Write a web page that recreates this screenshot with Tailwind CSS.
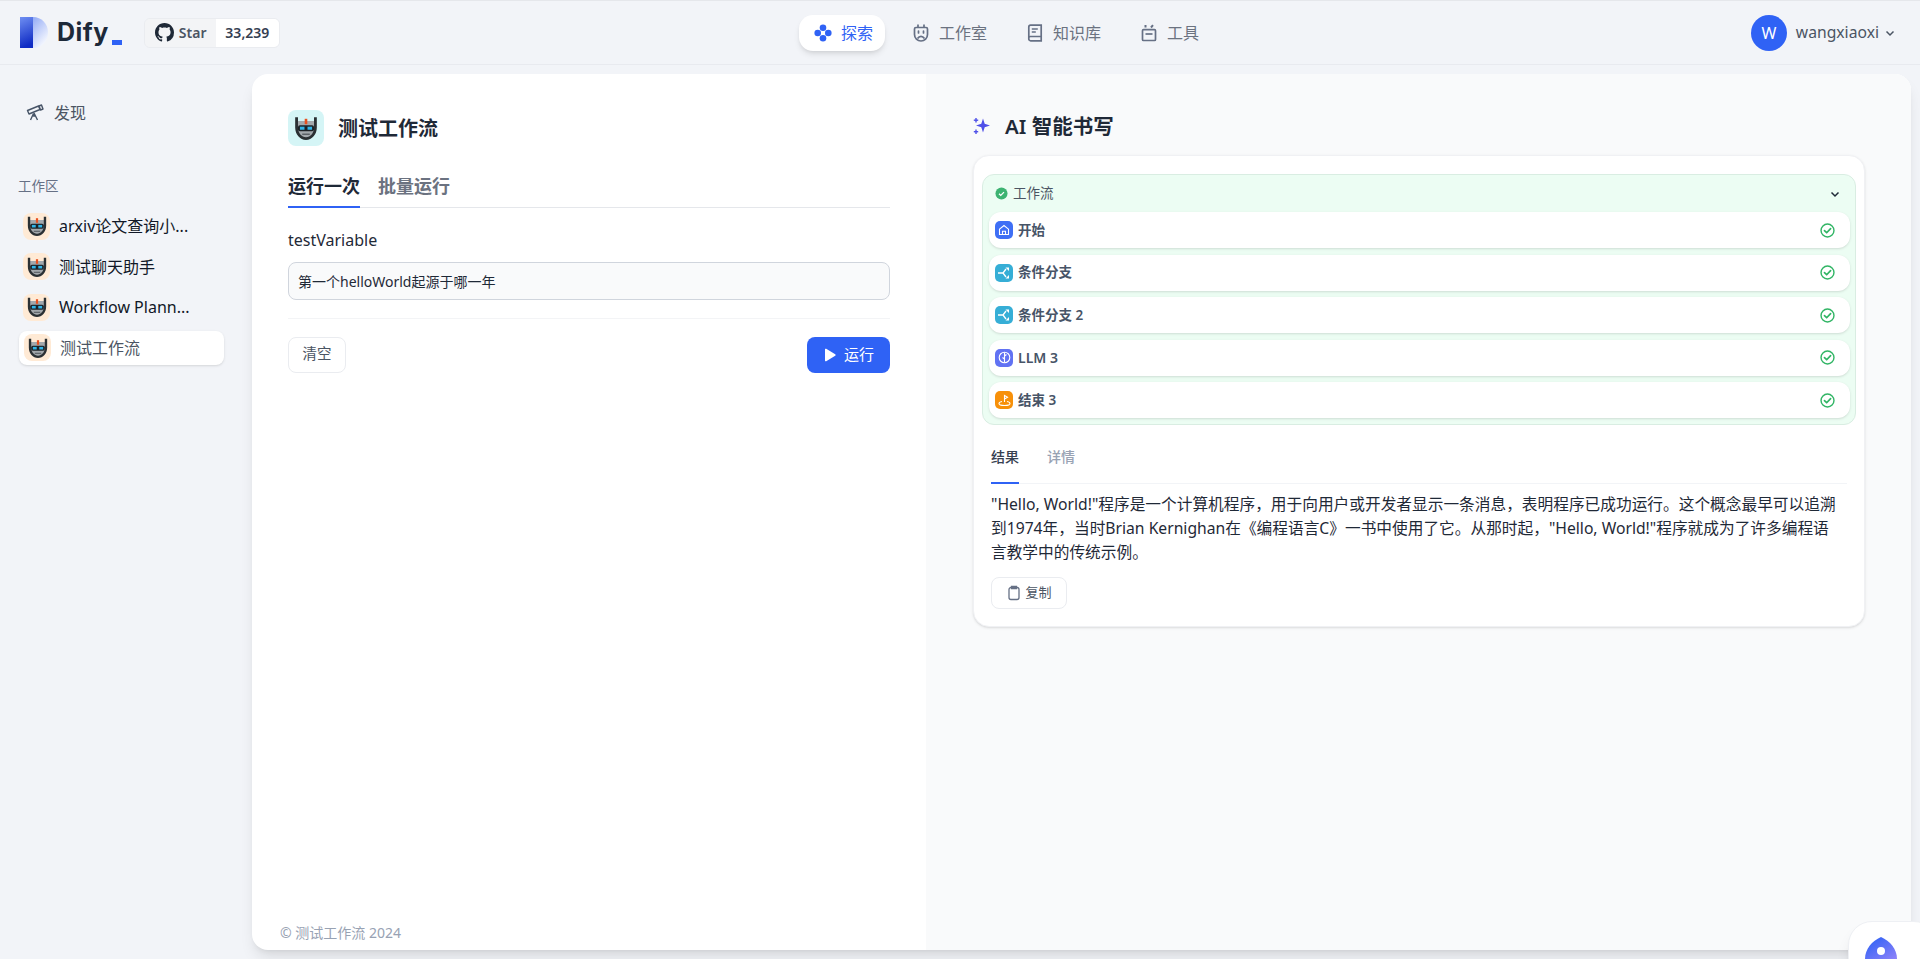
<!DOCTYPE html>
<html lang="en">
<head>
  <meta charset="UTF-8" />
  <meta name="viewport" content="width=device-width, initial-scale=1.0" />
  <title>测试工作流 - Dify</title>
  <script src="https://cdn.jsdelivr.net/npm/@tailwindcss/browser@4"></script>
</head>
<body class="bg-[#f2f4f8] text-[#1f2937] font-['Noto_Sans','Noto_Sans_CJK_SC',sans-serif]">
  <!-- shared icons -->
  <svg class="hidden">
    <defs>
      <symbol id="robot" viewBox="0 0 24 24">
        <path d="M2 2h2.600v3.500h14.800V2H22v9.500C22 18 17.500 23 12 23S2 18 2 11.500z" fill="#2b3033"/>
        <path d="M4.600 5.500h14.800v6c0 5-3.300 9-7.400 9s-7.400-4-7.400-9z" fill="#a3a8ac"/>
        <rect x="4.600" y="9.500" width="14.800" height="5.400" rx="1.800" fill="#1c2226"/>
        <rect x="6.400" y="10.800" width="4.200" height="2.800" fill="#2fb4e8"/>
        <rect x="13.400" y="10.800" width="4.200" height="2.800" fill="#2fb4e8"/>
        <rect x="10.800" y="3.500" width="2.400" height="5" fill="#e8501f"/>
        <path d="M8.500 17.800h7" stroke="#5b6065" stroke-width="1.300"/>
      </symbol>
      <symbol id="check" viewBox="0 0 16 16">
        <circle cx="8" cy="8" r="6.900" fill="none" stroke="#31b565" stroke-width="1.500"/>
        <path d="M4.800 8.200l2.300 2.200L11.300 6" fill="none" stroke="#31b565" stroke-width="1.800" stroke-linecap="round" stroke-linejoin="round"/>
      </symbol>
      <symbol id="branch" viewBox="0 0 18 18">
        <path d="M3 9h5l3-4M8 9l3 4" fill="none" stroke="#fff" stroke-width="1.300"/>
        <path d="M10.500 3.500h3.500v3.500zM10.500 14.500h3.500V11z" fill="#fff"/>
      </symbol>
    </defs>
  </svg>

  <div class="relative h-screen w-full overflow-hidden flex flex-col border-t border-[#e5e7eb]">
    <!-- header -->
    <header class="h-[64px] shrink-0 border-b border-[#e8eaef] flex items-center">
      <div class="w-[799px] shrink-0 flex items-center pl-[20px]">
        <svg class="w-[28px] h-[31px]" viewBox="0 0 28 31">
          <defs>
            <linearGradient id="logoA" x1="0" y1="0" x2="1" y2="1">
              <stop offset="0" stop-color="#6f8ff2"/>
              <stop offset="0.85" stop-color="#f2f5fe"/>
              <stop offset="1" stop-color="#ffffff"/>
            </linearGradient>
            <linearGradient id="logoB" x1="0" y1="0" x2="0.2" y2="1">
              <stop offset="0" stop-color="#6f8ff2"/>
              <stop offset="1" stop-color="#0f2bc4"/>
            </linearGradient>
          </defs>
          <path d="M0 0h13c8.500 0 15 6.500 15 15.500S21.500 31 13 31H0z" fill="url(#logoA)"/>
          <path d="M0 0h13v31H0z" fill="url(#logoB)"/>
        </svg>
        <span class="ml-[9px] text-[25px] leading-none font-bold tracking-[0.5px] text-[#1d2939] font-['Inter',sans-serif]">Dify</span>
        <span class="ml-[3px] mt-[19px] w-[10px] h-[5px] bg-[#2f62f5]"></span>
        <div class="ml-[22px] h-[30px] flex items-center rounded-md border border-[#eaecf0] overflow-hidden">
          <div class="h-full w-[71px] flex items-center gap-[5px] pl-[10px] bg-[#f3f4f6]">
            <svg class="w-[19px] h-[19px]" viewBox="0 0 16 16" fill="#1f2937"><path d="M8 0C3.580 0 0 3.580 0 8c0 3.540 2.290 6.530 5.470 7.590.4.070.55-.17.55-.38 0-.19-.01-.82-.01-1.490-2.010.37-2.530-.49-2.690-.94-.09-.23-.48-.94-.82-1.130-.28-.15-.68-.52-.01-.53.630-.01 1.080.58 1.230.82.720 1.210 1.870.87 2.330.66.070-.52.280-.87.510-1.070-1.780-.2-3.640-.89-3.640-3.950 0-.87.310-1.590.820-2.150-.08-.2-.36-1.020.08-2.120 0 0 .67-.21 2.200.82.640-.18 1.320-.27 2-.27s1.360.09 2 .27c1.530-1.040 2.200-.82 2.200-.82.440 1.100.16 1.920.08 2.120.51.560.82 1.270.82 2.150 0 3.070-1.870 3.750-3.650 3.950.29.250.54.730.54 1.480 0 1.070-.01 1.930-.01 2.200 0 .21.15.46.55.38A8.010 8.010 0 0 0 16 8c0-4.420-3.580-8-8-8z"/></svg>
            <span class="text-[14px] font-semibold text-[#4b5563]">Star</span>
          </div>
          <div class="h-full w-[63px] flex items-center justify-center bg-white text-[14px] font-semibold text-[#354052]">33,239</div>
        </div>
      </div>

      <nav class="flex items-center gap-[12px] text-[16px] text-[#6b7280]">
        <a class="h-[36px] flex items-center gap-2 pl-[14px] pr-[12px] rounded-[14px] bg-white text-[#2f62f5] shadow-md">
          <svg class="w-[20px] h-[20px]" viewBox="0 0 20 20" fill="#2f62f5"><circle cx="10" cy="4.700" r="3.300"/><circle cx="10" cy="15.300" r="3.300"/><circle cx="4.700" cy="10" r="3.300"/><circle cx="15.300" cy="10" r="3.300"/></svg>
          探索
        </a>
        <a class="h-[36px] flex items-center gap-2 pl-[14px] pr-[12px]">
          <svg class="w-[20px] h-[20px]" viewBox="0 0 20 20" fill="none" stroke="#667085" stroke-width="1.700"><path d="M7 1.500v3M13 1.500v3M5 4.500h10a1.500 1.500 0 0 1 1.500 1.500v5.500a6.500 6.500 0 0 1-13 0V6A1.500 1.500 0 0 1 5 4.500z"/><path d="M7.500 8v2M12.500 8v2" stroke-linecap="round"/><path d="M6.500 15.500c1 -1.500 2.200 -2.200 3.500 -2.200s2.500 .7 3.500 2.200"/></svg>
          工作室
        </a>
        <a class="h-[36px] flex items-center gap-2 pl-[14px] pr-[12px]">
          <svg class="w-[20px] h-[20px]" viewBox="0 0 20 20" fill="none" stroke="#667085" stroke-width="1.700"><path d="M3.800 15V4a1.800 1.800 0 0 1 1.800-1.800h10.600v15.600H5.600A1.800 1.800 0 0 1 3.800 16v-1a1.500 1.500 0 0 1 1.500-1.500h10.900"/><path d="M6.800 6h6M6.800 9h4"/></svg>
          知识库
        </a>
        <a class="h-[36px] flex items-center gap-2 pl-[14px] pr-[12px]">
          <svg class="w-[20px] h-[20px]" viewBox="0 0 20 20" fill="none" stroke="#667085" stroke-width="1.700"><rect x="3.500" y="6.700" width="13" height="10.800" rx="1"/><path d="M6.500 11h7"/><path d="M6.500 2v2.500M12 4.500l2-2.300" stroke-width="2"/></svg>
          工具
        </a>
      </nav>

      <div class="ml-auto pr-[24px] flex items-center">
        <div class="w-[36px] h-[36px] rounded-full bg-[#2f62f5] text-white text-[16px] flex items-center justify-center">W</div>
        <span class="ml-[9px] text-[15.700px] text-[#4b5563]">wangxiaoxi</span>
        <svg class="ml-[5px] w-[12px] h-[12px]" viewBox="0 0 12 12" fill="none" stroke="#4b5563" stroke-width="1.500"><path d="M2.500 4.500L6 8l3.500-3.500"/></svg>
      </div>
    </header>

    <div class="flex-1 min-h-0 flex">
      <!-- sidebar -->
      <aside class="w-[252px] shrink-0 pl-[19px] pr-[28px] pt-[32px]">
        <div class="flex items-center gap-[10px] pl-[7px] h-[32px] text-[16px] text-[#4b5563]">
          <svg class="w-[18px] h-[18px]" viewBox="0 0 18 18" fill="none" stroke="#475467" stroke-width="1.400" stroke-linejoin="round"><path d="M1.500 6.500l11-4.500 1.500 3.500-11 4.500z"/><path d="M13 2l2.500-1L17 5l-2.500 1z"/><path d="M8 9l3.500 7M7.500 9.500L4.500 16M8 9.500V13"/></svg>
          发现
        </div>
        <div class="mt-[47px] -ml-px text-[13.500px] leading-[20px] text-[#667085]">工作区</div>
        <ul class="mt-[13px] flex flex-col gap-[6.500px] text-[16px] text-[#111827]">
          <li class="h-[34px] flex items-center gap-[9px] pl-[4px]">
            <span class="w-[27px] h-[27px] rounded-lg bg-[#ffead5] flex items-center justify-center"><svg class="w-[22px] h-[22px]"><use href="#robot"/></svg></span>
            arxiv论文查询小...
          </li>
          <li class="h-[34px] flex items-center gap-[9px] pl-[4px]">
            <span class="w-[27px] h-[27px] rounded-lg bg-[#ffead5] flex items-center justify-center"><svg class="w-[22px] h-[22px]"><use href="#robot"/></svg></span>
            测试聊天助手
          </li>
          <li class="h-[34px] flex items-center gap-[9px] pl-[4px]">
            <span class="w-[27px] h-[27px] rounded-lg bg-[#ffead5] flex items-center justify-center"><svg class="w-[22px] h-[22px]"><use href="#robot"/></svg></span>
            Workflow Plann...
          </li>
          <li class="h-[34px] flex items-center gap-[9px] pl-[5px] rounded-lg bg-white shadow-sm text-[#4b5563]">
            <span class="w-[27px] h-[27px] rounded-lg bg-[#ffead5] flex items-center justify-center"><svg class="w-[22px] h-[22px]"><use href="#robot"/></svg></span>
            测试工作流
          </li>
        </ul>
      </aside>

      <!-- main card -->
      <main class="flex-1 min-w-0 mt-[9px] mb-[9px] mr-[9px] rounded-2xl bg-white shadow-lg flex overflow-hidden">
        <section class="w-[674px] shrink-0 px-[36px] pt-[36px] flex flex-col">
          <div class="flex items-center gap-[14px]">
            <span class="w-[36px] h-[36px] rounded-lg bg-[#d5f5f6] flex items-center justify-center"><svg class="w-[26px] h-[26px]"><use href="#robot"/></svg></span>
            <h1 class="mt-[1px] text-[20px] font-semibold text-[#1f2937]">测试工作流</h1>
          </div>
          <div class="mt-[23px] flex gap-[18px] border-b border-[#e5e7eb] text-[18px] leading-[27px] font-semibold h-[39px]">
            <div class="h-[39px] pt-[4px] border-b-2 border-[#2f62f5] text-[#1f2937]">运行一次</div>
            <div class="pt-[4px] text-[#6b7280]">批量运行</div>
          </div>
          <label class="mt-[20px] text-[16px] leading-[24px] text-[#1f2937]">testVariable</label>
          <div class="mt-[10px] h-[38px] px-[9px] rounded-lg border border-[#d0d5dd] bg-[#f9fafb] flex items-center text-[14px] text-[#1f2937]">第一个helloWorld起源于哪一年</div>
          <div class="mt-[18px] border-t border-[#f3f4f6]"></div>
          <div class="mt-[18px] flex items-center justify-between">
            <button class="h-[36px] w-[58px] pb-[2px] rounded-lg border border-[#eaecf0] bg-white text-[14.500px] text-[#4b5563]">清空</button>
            <button class="h-[36px] w-[83px] pb-[1px] rounded-lg bg-[#2f62f5] text-white text-[15px] flex items-center justify-center gap-[7px]">
              <svg class="w-[14px] h-[14px]" viewBox="0 0 14 14" fill="#fff"><path d="M2 1.500a.8.8 0 0 1 1.200-.7l9 5.500a.8.8 0 0 1 0 1.400l-9 5.500A.8.800 0 0 1 2 12.500z"/></svg>
              运行
            </button>
          </div>
          <div class="mt-auto mb-[7px] -ml-[8px] text-[14px] leading-[20px] text-[#98a2b3]">© 测试工作流 2024</div>
        </section>

        <section class="flex-1 min-w-0 bg-[#f9fafb] pl-[47px] pr-[46px] pt-[36px]">
          <div class="flex items-center gap-[14px] h-[32px]">
            <svg class="w-[18px] h-[18px]" viewBox="0 0 18 18" fill="#4f50e8"><path d="M10 1.500l1.700 5.300 5.300 1.700-5.300 1.700L10 15.500l-1.700-5.300L3 8.500l5.300-1.700z"/><rect x="2.300" y="1" width="1.400" height="4.500"/><rect x="0.800" y="2.500" width="4.400" height="1.400"/><rect x="2.300" y="12.500" width="1.400" height="4.500"/><rect x="0.800" y="14" width="4.400" height="1.400"/></svg>
            <h2 class="text-[20.500px] font-semibold text-[#1f2937]">AI 智能书写</h2>
          </div>
          <div class="mt-[13px] h-[472px] rounded-2xl border border-[#f0f1f4] bg-white shadow-sm px-[8px] pt-[18px]">
            <div class="h-[251px] rounded-xl border border-[#d9ede2] bg-[#ecfdf3] pl-[6px] pr-[5px]">
              <div class="h-[37px] flex items-center pl-[6px] pr-[9px] text-[13.500px] text-[#4b5563]">
                <svg class="w-[13px] h-[13px] mr-[5px]" viewBox="0 0 14 14"><circle cx="7" cy="7" r="6.500" fill="#3cb371"/><path d="M4.300 7.200l1.900 1.800 3.500-3.500" fill="none" stroke="#fff" stroke-width="1.400"/></svg>
                工作流
                <svg class="ml-auto w-[12px] h-[12px]" viewBox="0 0 12 12" fill="none" stroke="#1f2937" stroke-width="1.500"><path d="M2.500 4.500L6 8l3.500-3.500"/></svg>
              </div>
              <div class="flex flex-col gap-[6.500px] text-[13.500px] font-semibold text-[#475467]">
                <div class="h-[36px] rounded-xl bg-white shadow-sm flex items-center pl-[6px] pr-[15px]">
                  <span class="w-[18px] h-[18px] rounded-[5px] bg-[#3f6ff5] flex items-center justify-center mr-[5px]">
                    <svg class="w-[12px] h-[12px]" viewBox="0 0 12 12" fill="none" stroke="#fff" stroke-width="1.100"><path d="M1.500 5.200L6 1.500l4.500 3.700v5.300h-9z"/><path d="M4.500 10.500V7.200h3v3.300"/></svg>
                  </span>
                  开始
                  <svg class="ml-auto w-[15px] h-[15px]"><use href="#check"/></svg>
                </div>
                <div class="h-[36px] rounded-xl bg-white shadow-sm flex items-center pl-[6px] pr-[15px]">
                  <span class="w-[18px] h-[18px] rounded-[5px] bg-[#36aed6] mr-[5px]"><svg class="w-[18px] h-[18px]"><use href="#branch"/></svg></span>
                  条件分支
                  <svg class="ml-auto w-[15px] h-[15px]"><use href="#check"/></svg>
                </div>
                <div class="h-[36px] rounded-xl bg-white shadow-sm flex items-center pl-[6px] pr-[15px]">
                  <span class="w-[18px] h-[18px] rounded-[5px] bg-[#36aed6] mr-[5px]"><svg class="w-[18px] h-[18px]"><use href="#branch"/></svg></span>
                  条件分支 2
                  <svg class="ml-auto w-[15px] h-[15px]"><use href="#check"/></svg>
                </div>
                <div class="h-[36px] rounded-xl bg-white shadow-sm flex items-center pl-[6px] pr-[15px]">
                  <span class="w-[18px] h-[18px] rounded-[5px] bg-[#6172f3] flex items-center justify-center mr-[5px]">
                    <svg class="w-[13px] h-[13px]" viewBox="0 0 13 13" fill="none" stroke="#fff" stroke-width="1.100"><circle cx="6.500" cy="6.500" r="5.300"/><path d="M6.500 1.500v10M6.500 5l2-1.500M6.500 8l-2-1.500"/></svg>
                  </span>
                  <span class="text-[14px]">LLM 3</span>
                  <svg class="ml-auto w-[15px] h-[15px]"><use href="#check"/></svg>
                </div>
                <div class="h-[36px] rounded-xl bg-white shadow-sm flex items-center pl-[6px] pr-[15px]">
                  <span class="w-[18px] h-[18px] rounded-[5px] bg-[#f79009] flex items-center justify-center mr-[5px]">
                    <svg class="w-[13px] h-[13px]" viewBox="0 0 13 13" fill="none" stroke="#fff" stroke-width="1.100"><path d="M6.500 8V1.500l3 1.700-3 1.700"/><path d="M4 7.500c-2 .4-3 1.100-3 2 0 1.100 2.400 2 5.500 2s5.500-.9 5.500-2c0-.9-1-1.600-3-2"/></svg>
                  </span>
                  结束 3
                  <svg class="ml-auto w-[15px] h-[15px]"><use href="#check"/></svg>
                </div>
              </div>
            </div>

            <div class="mt-[14px] mx-[9px] h-[45px] flex gap-[28px] border-b border-[#f2f4f7] text-[14px] font-medium">
              <div class="h-[45px] pt-[7px] border-b-2 border-[#2f62f5] text-[#374151]">结果</div>
              <div class="pt-[7px] text-[#98a2b3]">详情</div>
            </div>
            <p class="mx-[9px] mt-[8px] text-[15.700px] leading-[24px] text-[#1f2937]">"Hello, World!"程序是一个计算机程序，用于向用户或开发者显示一条消息，表明程序已成功运行。这个概念最早可以追溯到1974年，当时Brian Kernighan在《编程语言C》一书中使用了它。从那时起，"Hello, World!"程序就成为了许多编程语<br>言教学中的传统示例。</p>
            <button class="mx-[9px] mt-[13px] h-[32px] w-[76px] rounded-lg border border-[#eaecf0] bg-white flex items-center justify-center gap-[3px] text-[13px] text-[#4b5563]">
              <svg class="w-[16px] h-[16px]" viewBox="0 0 16 16" fill="none" stroke="#667085" stroke-width="1.300"><rect x="3" y="2.500" width="10" height="12" rx="2"/><path d="M5.500 1.500h5v2h-5z" fill="#667085"/></svg>
              复制
            </button>
          </div>
        </section>
      </main>
    </div>

    <!-- floating help bubble -->
    <div class="absolute left-[1848px] top-[920px] w-[90px] h-[90px] rounded-[24px] bg-white border border-[#eef0f4] shadow-lg pl-[16px] pt-[15px]">
      <svg class="w-[32px] h-[36px]" viewBox="0 0 32 36">
        <defs><linearGradient id="blob" x1="0.2" y1="0" x2="0.8" y2="1"><stop offset="0" stop-color="#2f62f5"/><stop offset="1" stop-color="#a78bfa"/></linearGradient></defs>
        <path d="M16 0c9 4 16 12 16 22 0 8-7 14-16 14S0 30 0 22C0 12 7 4 16 0z" fill="url(#blob)"/>
        <circle cx="16" cy="14" r="4" fill="#fff"/>
        <ellipse cx="16" cy="27" rx="7" ry="5" fill="#fff"/>
      </svg>
    </div>
  </div>
</body>
</html>
